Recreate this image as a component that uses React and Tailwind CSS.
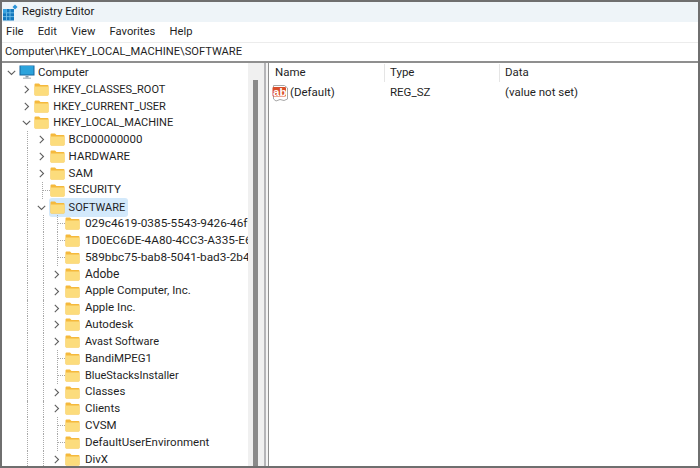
const font = { fontFamily: 'Roboto, sans-serif' };

function Chevron({ open }) {
  return (
    <svg width="9" height="9" viewBox="0 0 9 9" fill="none" stroke="#5f5f5f" strokeWidth="1.1">
      {open ? <path d="M0.8 2.8 L4.5 6.5 L8.2 2.8" /> : <path d="M2.8 0.8 L6.5 4.5 L2.8 8.2" />}
    </svg>
  );
}

function Folder() {
  return (
    <svg width="15" height="13" viewBox="0 0 15 13" className="shrink-0">
      <path d="M0.5 1.5 Q0.5 0.5 1.5 0.5 H5 L6.5 2 H13.5 Q14.5 2 14.5 3 V11.5 Q14.5 12.5 13.5 12.5 H1.5 Q0.5 12.5 0.5 11.5 Z" fill="#f5b93c" />
      <rect x="0.5" y="3.6" width="14" height="8.9" rx="0.8" fill="#fcdc7c" />
    </svg>
  );
}

function Monitor() {
  return (
    <svg width="16" height="15" viewBox="0 0 16 15" className="shrink-0">
      <rect x="0.5" y="0.5" width="15" height="10" fill="#16679f" />
      <rect x="1.5" y="1" width="13" height="8.5" fill="#2ba3dc" />
      <rect x="6.5" y="11" width="3" height="1.6" fill="#8a9aa6" />
      <rect x="4" y="12.6" width="8" height="1.2" fill="#a9b4bc" />
    </svg>
  );
}

function RegIcon() {
  return (
    <svg width="16" height="17" viewBox="0 0 16 17" className="shrink-0">
      <rect x="1" y="5" width="11" height="11.5" fill="#1478bd" />
      <path d="M4.5 5V16.5M8 5V16.5M1 8.8H12M1 12.6H12" stroke="#7cc6ee" strokeWidth="0.8" />
      <rect x="1" y="5" width="3.5" height="3.8" fill="#35a3e2" />
      <path d="M13 0.5 L15.5 3 L13 5.5 L10.5 3 Z" fill="#2b93d8" />
    </svg>
  );
}

function AbIcon() {
  return (
    <div className="relative w-[16px] h-[16px] shrink-0 mr-[2px]">
      <svg width="16" height="17" viewBox="0 0 16 17" className="absolute left-0 top-0">
        <path d="M1.5 0.5 H12.5 L15.5 3 V14 L12 15.5 L8 14.5 L4 16 L1.5 14 Z" fill="#fff" stroke="#a8a8a8" strokeWidth="1" />
        <rect x="0.5" y="2" width="13.5" height="9.5" rx="1" fill="#d94f2b" />
      </svg>
      <span className="absolute left-[1px] top-[0.5px] text-[11.5px] leading-[12px] font-black text-white" style={{ fontFamily: '"Liberation Sans", sans-serif' }}>ab</span>
    </div>
  );
}

const rows = [
  { t: "Computer", d: 0, c: "open", icon: "pc" },
  { t: "HKEY_CLASSES_ROOT", d: 1, c: "closed", s: "text-[11px]" },
  { t: "HKEY_CURRENT_USER", d: 1, c: "closed", s: "text-[11px]" },
  { t: "HKEY_LOCAL_MACHINE", d: 1, c: "open", s: "text-[11px]" },
  { t: "BCD00000000", d: 2, c: "closed" },
  { t: "HARDWARE", d: 2, c: "closed" },
  { t: "SAM", d: 2, c: "closed" },
  { t: "SECURITY", d: 2, c: "leaf" },
  { t: "SOFTWARE", d: 2, c: "open", sel: true, s: "text-[11px]" },
  { t: "029c4619-0385-5543-9426-46f9", d: 3, c: "leaf", s: "text-[11.8px]" },
  { t: "1D0EC6DE-4A80-4CC3-A335-E6", d: 3, c: "leaf", s: "text-[11.8px]" },
  { t: "589bbc75-bab8-5041-bad3-2b4", d: 3, c: "leaf", s: "text-[11.8px]" },
  { t: "Adobe", d: 3, c: "closed", s: "text-[12px]" },
  { t: "Apple Computer, Inc.", d: 3, c: "closed" },
  { t: "Apple Inc.", d: 3, c: "closed" },
  { t: "Autodesk", d: 3, c: "closed" },
  { t: "Avast Software", d: 3, c: "closed", s: "text-[11px]" },
  { t: "BandiMPEG1", d: 3, c: "leaf" },
  { t: "BlueStacksInstaller", d: 3, c: "leaf", s: "text-[11px]" },
  { t: "Classes", d: 3, c: "closed" },
  { t: "Clients", d: 3, c: "closed" },
  { t: "CVSM", d: 3, c: "leaf" },
  { t: "DefaultUserEnvironment", d: 3, c: "leaf" },
  { t: "DivX", d: 3, c: "closed" },
];

const gapByDepth = ["ml-[3px]", "ml-[4px]", "ml-[4px]", "ml-[5px]"];

function Row({ r }) {
  return (
    <div className="flex items-center h-[16.83px] shrink-0 whitespace-nowrap">
      {r.d >= 1 && <div className="w-[15.3px] shrink-0 h-full" />}
      {r.d >= 2 && <div className="w-[15.3px] shrink-0 h-full border-l border-dotted border-[#a8a8a8] ml-[9px] -mr-[9px]" />}
      {r.d >= 3 && <div className="w-[15.3px] shrink-0 h-full border-l border-dotted border-[#a8a8a8] ml-[9px] -mr-[9px]" />}
      <div className="w-[16px] shrink-0 h-full flex items-center justify-center relative">
        {r.c === "leaf" && <div className="absolute left-[8px] top-0 h-full w-[8px] border-l border-dotted border-[#a8a8a8]"><div className="mt-[8px] border-t border-dotted border-[#a8a8a8]" /></div>}
        {r.c !== "leaf" && <Chevron open={r.c === "open"} />}
      </div>
      <div className={r.sel ? "flex items-center h-[19px] bg-[#d3e9fb] rounded-[3px] -ml-[1px] pl-[1px] pr-[3px] relative" : "flex items-center"}>
        {r.icon === "pc" ? <Monitor /> : <Folder />}
        <span className={gapByDepth[r.d] + " leading-none text-[#1f1f1f] " + (r.s || "text-[11.5px]")} style={font}>{r.t}</span>
      </div>
    </div>
  );
}

export default function App() {
  return (
    <div className="w-[700px] h-[468px] overflow-hidden bg-white" style={font}>
      <div className="h-[468px] flex flex-col border-2 border-[#6f6f6f] bg-white">
        <div className="h-[20px] shrink-0 flex items-center bg-[#eef4f8]">
          <RegIcon />
          <span className="ml-[4px] text-[11.2px] text-[#1a1a1a]">Registry Editor</span>
        </div>
        <div className="h-[20px] shrink-0 flex items-center gap-[14.3px] pl-[4px] text-[11.2px] text-[#1f1f1f]">
          <span>File</span><span>Edit</span><span>View</span><span>Favorites</span><span>Help</span>
        </div>
        <div className="h-[21px] shrink-0 flex items-center pl-[3px] text-[11.15px] text-[#1f1f1f] border-t border-[#ececec] border-b-2 border-b-[#8f8f8f]">
          Computer\HKEY_LOCAL_MACHINE\SOFTWARE
        </div>
        <div className="flex-1 flex min-h-0">
          <div className="w-[246px] shrink-0 overflow-hidden pl-[1px] pt-[1px] flex flex-col">
            {rows.map((r) => <Row key={r.t} r={r} />)}
          </div>
          <div className="w-[16px] shrink-0 flex bg-[#f0f0f0]">
            <div className="w-[5px] ml-[5px] mt-[17px] mb-0 bg-[#8a8a8a]" />
          </div>
          <div className="w-[2px] shrink-0 bg-[#b5b5b8]" />
          <div className="w-[2px] shrink-0 bg-[#f4f4f4]" />
          <div className="flex-1 border-l border-[#8f8f8f] flex flex-col text-[11.5px] text-[#1f1f1f]">
            <div className="flex h-[20px] shrink-0 items-center pl-[6px]">
              <span className="w-[110px] border-r border-[#e5e5e5]">Name</span>
              <span className="w-[115px] pl-[5px] border-r border-[#e5e5e5]">Type</span>
              <span className="pl-[5px]">Data</span>
            </div>
            <div className="flex h-[20px] items-center pl-[3px]">
              <div className="flex items-center w-[118px]"><AbIcon /><span>(Default)</span></div>
              <span className="w-[115px]">REG_SZ</span>
              <span>(value not set)</span>
            </div>
          </div>
        </div>
      </div>
    </div>
  );
}
